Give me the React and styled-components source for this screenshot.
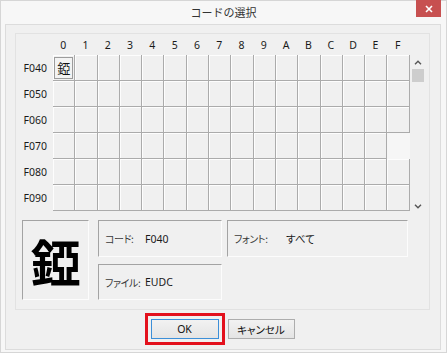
import React from 'react';
import styled, { createGlobalStyle } from 'styled-components';

const cols = ['0', '1', '2', '3', '4', '5', '6', '7', '8', '9', 'A', 'B', 'C', 'D', 'E', 'F'];
const rows = ['F040', 'F050', 'F060', 'F070', 'F080', 'F090'];
const sampleChar = '錏';

const GlobalStyle = createGlobalStyle`
  body {
    margin: 0;
    background: #fff;
    font-family: "Noto Sans", "Noto Sans CJK JP", sans-serif;
    color: #1a1a1a;
  }
`;

const Window = styled.div`
  width: 447px;
  height: 353px;
  box-sizing: border-box;
  background: #f7f7f7;
  border: 1px solid #d6d6d6;
  display: flex;
  flex-direction: column;
`;

const TitleBar = styled.div`
  height: 23px;
  display: grid;
  grid-template-columns: 1fr auto 1fr;
  align-items: start;
`;

const Title = styled.div`
  grid-column: 2;
  line-height: 23px;
  font-size: 11px;
  font-family: "Noto Sans CJK JP", sans-serif;
  color: #333;
`;

const CloseButton = styled.div`
  grid-column: 3;
  justify-self: end;
  margin: -1px 5px 0 0;
  width: 25px;
  height: 17px;
  background: #c75050;
  display: flex;
  align-items: center;
  justify-content: center;
`;

const Client = styled.div`
  flex: 1;
  margin: 0 5px 2px 4px;
  background: #f0f0f0;
  border: 1px solid #dcdcdc;
  padding: 8px 10px 0 9px;
  display: flex;
  flex-direction: column;
`;

const Panel = styled.div`
  height: 277px;
  box-sizing: border-box;
  border: 1px solid #e2e2e2;
  display: flex;
  flex-direction: column;
`;

const CodeGrid = styled.div`
  display: grid;
  grid-template-columns: 37px repeat(16, 22.3px) 14px;
  grid-template-rows: 21px repeat(6, 26px);
  font-size: 10.5px;
`;

const ColHead = styled.div`
  display: flex;
  align-items: center;
  justify-content: center;
  padding-right: 2px;
`;

const RowHead = styled.div`
  grid-column: 1;
  display: flex;
  align-items: center;
  justify-content: flex-end;
  padding-right: 6px;
`;

const Cell = styled.div`
  box-sizing: border-box;
  border-right: 1px solid ${p => (p.$blank ? 'transparent' : '#ababab')};
  border-bottom: 1px solid ${p => (p.$blank ? 'transparent' : '#ababab')};
  box-shadow: ${p => (p.$blank ? 'none' : 'inset 1px 1px 0 #fdfdfd')};
  background: ${p => (p.$blank ? '#f6f6f6' : '#f0f0f0')};
  display: flex;
  align-items: center;
  justify-content: center;
`;

const SelectedGlyph = styled.div`
  width: 19px;
  height: 22px;
  box-sizing: border-box;
  border: 1px solid #9c9c9c;
  background: #f3f3f3;
  display: flex;
  align-items: center;
  justify-content: center;
  font-family: "Noto Sans CJK JP", sans-serif;
  font-size: 13px;
  color: #111;
`;

const ScrollBar = styled.div`
  grid-column: 18;
  grid-row: 2 / 8;
  display: flex;
  flex-direction: column;
  align-items: center;
  padding: 5px 0 2px 2px;
`;

const Thumb = styled.div`
  margin-top: 4px;
  width: 12px;
  height: 13px;
  background: #cdcdcd;
`;

const Spacer = styled.div`
  flex: 1;
`;

const BottomArea = styled.div`
  display: flex;
  gap: 9px;
  padding-left: 6px;
  margin-top: 9px;
`;

const Sunken = styled.div`
  box-sizing: border-box;
  border: 1px solid;
  border-color: #a3a3a3 #fcfcfc #fcfcfc #a3a3a3;
`;

const BigChar = styled(Sunken)`
  width: 67px;
  height: 80px;
  display: flex;
  align-items: center;
  justify-content: center;
  font-family: "Noto Sans CJK JP", sans-serif;
  font-size: 50px;
  font-weight: 700;
  color: #000;
`;

const InfoGrid = styled.div`
  display: grid;
  grid-template-columns: 124px 181px;
  grid-template-rows: 37px 36px;
  column-gap: 5px;
  row-gap: 7px;
`;

const InfoBox = styled(Sunken)`
  display: flex;
  align-items: center;
  padding-left: 6px;
  font-size: 10.5px;
`;

const InfoLabel = styled.span`
  flex: 0 0 ${p => p.$w}px;
  font-family: "Noto Sans CJK JP", sans-serif;
  font-feature-settings: "palt";
  font-size: 10px;
  letter-spacing: -0.4px;
  color: #3a3a3a;
  white-space: nowrap;
`;

const InfoValue = styled.span`
  font-family: "Noto Sans", "Noto Sans CJK JP", sans-serif;
  font-feature-settings: "palt";
`;

const ButtonRow = styled.div`
  display: flex;
  justify-content: center;
  gap: 9px;
  margin-top: 9px;
`;

const Button = styled.button`
  width: ${p => p.$w}px;
  height: 20px;
  padding: 0;
  border: 1px solid ${p => (p.$primary ? '#3c8fd8' : '#adadad')};
  background: linear-gradient(#f2f2f2, #e4e4e4);
  font-family: "Noto Sans", "Noto Sans CJK JP", sans-serif;
  font-feature-settings: "palt";
  font-size: 10.5px;
  color: #111;
  outline: ${p => (p.$marked ? '3px solid #e3101c' : 'none')};
  outline-offset: 3px;
`;

const Chevron = ({ up }) => (
  <svg width="8" height="5" viewBox="0 0 8 5">
    <path d={up ? 'M1 4.2 L4 1.2 L7 4.2' : 'M1 0.8 L4 3.8 L7 0.8'} fill="none" stroke="#555" strokeWidth="1.4" />
  </svg>
);

export default function App() {
  return (
    <>
      <GlobalStyle />
      <Window>
        <TitleBar>
          <Title>コードの選択</Title>
          <CloseButton>
            <svg width="8" height="8" viewBox="0 0 8 8">
              <path d="M1 1 L7 7 M7 1 L1 7" stroke="#fff" strokeWidth="1.6" />
            </svg>
          </CloseButton>
        </TitleBar>
        <Client>
          <Panel>
            <CodeGrid>
              <div />
              {cols.map(c => (
                <ColHead key={c}>{c}</ColHead>
              ))}
              <div />
              {rows.map((r, ri) => (
                <React.Fragment key={r}>
                  <RowHead style={{ gridRow: ri + 2 }}>{r}</RowHead>
                  {cols.map((c, ci) => (
                    <Cell key={c} $blank={ri === 3 && ci === 15} style={{ gridRow: ri + 2 }}>
                      {ri === 0 && ci === 0 && <SelectedGlyph>{sampleChar}</SelectedGlyph>}
                    </Cell>
                  ))}
                </React.Fragment>
              ))}
              <ScrollBar>
                <Chevron up />
                <Thumb />
                <Spacer />
                <Chevron />
              </ScrollBar>
            </CodeGrid>
            <BottomArea>
              <BigChar>{sampleChar}</BigChar>
              <InfoGrid>
                <InfoBox>
                  <InfoLabel $w={40}>コード:</InfoLabel>
                  <InfoValue>F040</InfoValue>
                </InfoBox>
                <InfoBox>
                  <InfoLabel $w={52}>フォント:</InfoLabel>
                  <InfoValue>すべて</InfoValue>
                </InfoBox>
                <InfoBox>
                  <InfoLabel $w={40}>ファイル:</InfoLabel>
                  <InfoValue>EUDC</InfoValue>
                </InfoBox>
              </InfoGrid>
            </BottomArea>
          </Panel>
          <ButtonRow>
            <Button $w={68} $primary $marked>OK</Button>
            <Button $w={67}>キャンセル</Button>
          </ButtonRow>
        </Client>
      </Window>
    </>
  );
}
